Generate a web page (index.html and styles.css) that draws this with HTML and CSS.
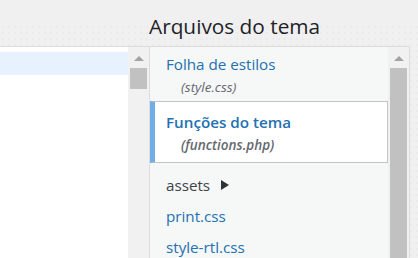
FILE: index.html
```html
<!DOCTYPE html>
<html lang="pt-BR">
<head>
	<meta charset="utf-8">
	<title>Editar temas</title>
	<link rel="stylesheet" href="styles.css">
</head>
<body>
<div class="wrap">
	<!-- editor de codigo -->
	<div class="editor-col">
		<div class="editor">
			<div class="code">
				<div class="active-line"></div>
			</div>
			<div class="vscroll">
				<span class="arrow-up"></span>
				<span class="thumb thumb-short"></span>
			</div>
		</div>
	</div>

	<!-- lista de arquivos -->
	<div class="sidebar">
		<h2>Arquivos do tema</h2>
		<div class="file-box">
			<ul class="files">
				<li class="file">
					<a href="#">Folha de estilos</a>
					<span class="file-name">(style.css)</span>
				</li>
				<li class="file current">
					<a href="#">Funções do tema</a>
					<span class="file-name">(functions.php)</span>
				</li>
				<li class="file folder">
					<span class="folder-label">assets</span>
					<svg class="caret" width="8" height="10" viewBox="0 0 8 10"><path d="M0 0 L8 5 L0 10 Z" fill="#2c3338"/></svg>
				</li>
				<li class="file"><a href="#">print.css</a></li>
				<li class="file"><a href="#">style-rtl.css</a></li>
			</ul>
			<div class="vscroll">
				<span class="arrow-up"></span>
				<span class="thumb thumb-long"></span>
			</div>
		</div>
	</div>
</div>
</body>
</html>
```

FILE: styles.css
```css
html, body {
	margin: 0;
	padding: 0;
	height: 100%;
}
body {
	background-color: #f0f0f1;
	background-image:
		linear-gradient(#f0f0f1 21px, rgba(240,240,241,0) 26px),
		radial-gradient(circle, #e7e7e8 0.6px, transparent 0.9px);
	background-size: 100% 100%, 6px 6px;
	color: #1d2327;
	font-family: "Open Sans", "Noto Sans", sans-serif;
	overflow: hidden;
}
.wrap {
	display: flex;
	align-items: flex-start;
}

/* editor */
.editor-col {
	width: 149px;
	padding-top: 46px;
	flex: none;
}
.editor {
	display: flex;
	border-top: 1px solid #dcdcde;
	height: 212px;
}
.code {
	width: 128px;
	background: #fff;
	padding-top: 5px;
}
.active-line {
	height: 23px;
	background: #e8f2fe;
}

/* barra de rolagem */
.vscroll {
	width: 21px;
	flex: none;
	background: #f1f1f1;
	display: flex;
	flex-direction: column;
	align-items: center;
}
.arrow-up {
	margin-top: 9px;
	width: 0;
	height: 0;
	border-left: 5px solid transparent;
	border-right: 5px solid transparent;
	border-bottom: 5px solid #a3a3a3;
}
.thumb {
	margin-top: 7px;
	width: 17px;
	background: #c1c1c1;
}
.thumb-short {
	height: 21px;
}
.thumb-long {
	height: 200px;
}

/* lista de arquivos */
.sidebar {
	flex: none;
}
h2 {
	margin: 0;
	height: 46px;
	box-sizing: border-box;
	padding-top: 12px;
	font-size: 20.8px;
	font-weight: 400;
	line-height: 28px;
	color: #1d2327;
}
.file-box {
	display: flex;
	width: 259px;
	height: 220px;
	border: 1px solid #dcdcde;
	background: #f6f7f7;
}
.files {
	list-style: none;
	margin: 0;
	padding: 0;
	width: 238px;
	font-size: 15.2px;
}
.file {
	padding: 4px 0 3px 16px;
	line-height: 24px;
	display: flex;
	flex-direction: column;
	align-items: flex-start;
}
.file:first-child {
	padding-top: 5px;
	padding-bottom: 2px;
}
.file a {
	color: #2271b1;
	text-decoration: none;
}
.file-name {
	padding-left: 15px;
	font-size: 13.5px;
	font-style: italic;
	color: #646970;
	line-height: 23px;
}
.current {
	background: #fff;
	border: 1px solid #c3c4c7;
	border-left: 5px solid #72aee6;
	padding: 8px 0 5px 11px;
	margin-bottom: 6px;
}
.current a, .current .file-name {
	font-weight: 600;
}
.folder {
	flex-direction: row;
	align-items: center;
	color: #3c434a;
}
.caret {
	margin-left: 11px;
}
```
